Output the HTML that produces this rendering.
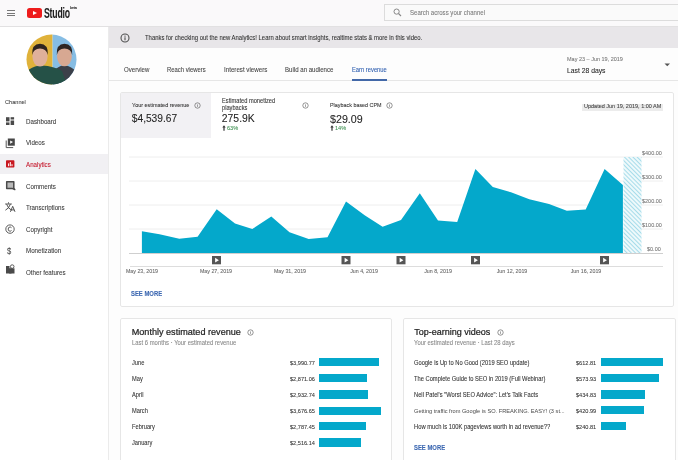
<!DOCTYPE html>
<html><head><meta charset="utf-8">
<style>
*{box-sizing:border-box;margin:0;padding:0}
html,body{width:678px;height:460px;overflow:hidden;background:#fdfdfd;font-family:"Liberation Sans",sans-serif;color:#282828}
.a{position:absolute;white-space:nowrap}
#hdr{position:absolute;left:0;top:0;width:678px;height:27px;background:#faf9fa;border-bottom:1px solid #e2e1e2}
#side{position:absolute;left:0;top:27px;width:109px;height:433px;background:#fff;border-right:1px solid #ebebeb}
#banner{position:absolute;left:109px;top:27px;width:569px;height:21px;background:#e8e6e9}
.card{position:absolute;background:#fff;border:1px solid #e6e6e6;border-radius:2px}
.nav{font-size:6.82px;color:#3a3a3a}
.ico{position:absolute}
.s{transform:scaleX(0.909);transform-origin:0 50%}
.s.xl{transform:translateX(-50%) scaleX(0.909);transform-origin:50% 50%}
body>*{filter:blur(0.3px)}
.a{-webkit-text-stroke:0.08px currentColor}
.tab{top:66px;height:8px;line-height:8px}
.xl{top:268.4px;font-size:5.83px;color:#666;transform:translateX(-50%)}
.ml{font-size:6.27px;color:#333}
.mv{font-size:6.16px;color:#333}
.tl{font-size:6.33px;color:#333}
.bar{height:8.2px;background:#04a8cb}
</style></head><body>
<div id="hdr">
  <!-- hamburger -->
  <div class="a" style="left:6.5px;top:10px;width:8px;height:1px;background:#777"></div>
  <div class="a" style="left:6.5px;top:12.5px;width:8px;height:1px;background:#777"></div>
  <div class="a" style="left:6.5px;top:15px;width:8px;height:1px;background:#777"></div>
  <!-- yt logo -->
  <div class="a" style="left:26.5px;top:7.8px;width:15px;height:10px;background:#ee1c1c;border-radius:2.5px"></div>
  <svg class="a" style="left:26.5px;top:7.8px" width="15" height="10"><path d="M6 3 L10 5 L6 7 Z" fill="#fff"/></svg>
  <div class="a" style="left:43.8px;top:4.6px;font-size:14px;line-height:16px;font-weight:bold;letter-spacing:-0.3px;color:#1e1e1e;transform:scaleX(0.62);transform-origin:left">Studio</div>
  <div class="s a" style="left:70px;top:7.40px;font-size:3.74px;line-height:3px;font-weight:bold;color:#333">beta</div>
  <!-- search -->
  <div class="a" style="left:384px;top:4px;width:300px;height:17px;background:#fafafa;border:1px solid #dcdcdc"></div>
  <svg class="a" style="left:393px;top:8px" width="9" height="9"><circle cx="3.6" cy="3.6" r="2.6" fill="none" stroke="#888" stroke-width="1"/><line x1="5.5" y1="5.5" x2="8" y2="8" stroke="#888" stroke-width="1.1"/></svg>
  <div class="s a" style="left:410px;top:8.64px;font-size:6.66px;color:#7a7a7a">Search across your channel</div>
</div>

<div id="side">
  <svg class="a" style="left:26px;top:7px" width="51" height="51" viewBox="0 0 51 51">
    <defs><clipPath id="cc"><circle cx="25.5" cy="25.5" r="25"/></clipPath></defs>
    <g clip-path="url(#cc)">
      <rect x="0" y="0" width="26.6" height="51" fill="#e0b23a"/>
      <rect x="26.6" y="0" width="25" height="51" fill="#86bde4"/>
      <!-- right person -->
      <path d="M27 51 L28 37 Q33 31 38.5 31.5 Q46 32 50 38 L51 51 Z" fill="#3b4049"/>
      <ellipse cx="38.4" cy="22.6" rx="7.4" ry="9.6" fill="#d7a892"/>
      <path d="M30.8 21 Q30 10 38.5 9.8 Q47 10 46.2 21 Q45 14.5 38.5 14.5 Q32 14.5 30.8 21 Z" fill="#2f2624"/>
      <!-- left person -->
      <path d="M0 51 L3 35.5 Q10 31 16 31.5 Q28 32 36 37 L41 51 Z" fill="#255147"/>
      <ellipse cx="14" cy="22.6" rx="7.6" ry="10" fill="#dfb09a"/>
      <path d="M6.2 21 Q5.5 10 14 9.8 Q22.5 10 21.8 21 Q20.5 14.5 14 14.5 Q7.5 14.5 6.2 21 Z" fill="#2e2420"/>
    </g>
  </svg>
  <div class="s a" style="left:5px;top:71.16px;font-size:6.16px;color:#444">Channel</div>
  <div class="a" style="left:0;top:127px;width:108px;height:20px;background:#f1f0f3"></div>
  <!-- labels -->
  <div class="s a nav" style="left:26px;top:91.2px">Dashboard</div>
  <div class="s a nav" style="left:26px;top:112.2px">Videos</div>
  <div class="s a nav" style="left:26px;top:134.3px;color:#c4162a">Analytics</div>
  <div class="s a nav" style="left:26px;top:155.9px">Comments</div>
  <div class="s a nav" style="left:26px;top:177.2px">Transcriptions</div>
  <div class="s a nav" style="left:26px;top:199.2px">Copyright</div>
  <div class="s a nav" style="left:26px;top:220.4px">Monetization</div>
  <div class="s a nav" style="left:26px;top:242.2px">Other features</div>
</div>

<svg class="a" style="left:0;top:0" width="110" height="460">
  <g fill="#4a4a4a">
    <rect x="6" y="117.2" width="3.5" height="4.2"/><rect x="10.6" y="117.2" width="3.5" height="2.3"/>
    <rect x="6" y="122.4" width="3.5" height="2.6"/><rect x="10.6" y="120.5" width="3.5" height="4.5"/>
  </g>
  <path d="M6.2 140.5 V147.6 H13.2" fill="none" stroke="#555" stroke-width="1"/>
  <rect x="7.8" y="138.5" width="7" height="7.2" fill="#474747"/>
  <path d="M10.2 140.4 L13 142.1 L10.2 143.8 Z" fill="#fff"/>
  <rect x="6" y="160.2" width="8.4" height="7.4" rx="0.8" fill="#c8171f"/>
  <rect x="8.1" y="163.4" width="1" height="2.8" fill="#fff"/><rect x="9.8" y="162" width="1" height="4.2" fill="#fff"/><rect x="11.5" y="164.2" width="1" height="2" fill="#fff"/>
  <path d="M6.7 181.8 H13.8 V188.2 L14.8 189.6 L12.6 188.6 H6.7 Z" fill="#b9b9b9" stroke="#4a4a4a" stroke-width="1.5" stroke-linejoin="round"/>
  <circle cx="10" cy="229.1" r="4.2" fill="none" stroke="#4a4a4a" stroke-width="0.9"/>
  <path d="M11.5 227.7 Q11 227 10 227 Q8.2 227 8.2 229.1 Q8.2 231.2 10 231.2 Q11 231.2 11.5 230.5" fill="none" stroke="#4a4a4a" stroke-width="0.9"/>
  <path d="M0 1.5 H3.5 V4 H5.5 V9 H0 Z" transform="translate(6,264.5)" fill="#4a4a4a"/>
  <rect x="9.2" y="268.3" width="5.3" height="5.2" fill="#4a4a4a"/>
  <circle cx="12.2" cy="266.6" r="1.8" fill="none" stroke="#4a4a4a" stroke-width="0.9"/>
</svg>
<svg class="a" style="left:0;top:196px" width="20" height="20"><g fill="none" stroke="#4a4a4a" stroke-width="0.95">
<path d="M8.5 6.3 V7.6"/><path d="M5.2 8 H11.8"/><path d="M6.6 8.2 Q8 12.5 11.6 14.2"/><path d="M10.4 8.2 Q9 12.5 5.4 14.2"/>
<path d="M10.4 15.8 L12.7 10.3 L15 15.8"/><path d="M11.3 13.9 H14.1"/></g></svg>
<div class="a" style="left:7.2px;top:245px;font-size:9.5px;line-height:11px;color:#4a4a4a;transform:scaleX(0.8);transform-origin:left">$</div>
<div id="banner">
  <svg class="a" style="left:11px;top:6px" width="10" height="10"><circle cx="5" cy="5" r="4" fill="none" stroke="#505050" stroke-width="1.1"/><rect x="4.45" y="4.3" width="1.1" height="3" fill="#505050"/><rect x="4.45" y="2.6" width="1.1" height="1.1" fill="#505050"/></svg>
  <div class="s a" style="left:36px;top:7.14px;font-size:6.53px;color:#333">Thanks for checking out the new Analytics! Learn about smart insights, realtime stats &amp; more in this video.</div>
</div>

<!-- tabs -->
<div class="a" style="left:109px;top:80px;width:569px;height:1px;background:#e6e6e6"></div>
<div class="s a tab" style="left:123.8px;font-size:6.71px;color:#444">Overview</div>
<div class="s a tab" style="left:167px;font-size:6.49px;color:#444">Reach viewers</div>
<div class="s a tab" style="left:223.6px;font-size:6.82px;color:#444">Interest viewers</div>
<div class="s a tab" style="left:285px;font-size:6.71px;color:#444">Build an audience</div>
<div class="s a tab" style="left:352px;font-size:6.38px;color:#3160b0">Earn revenue</div>
<div class="a" style="left:352px;top:79px;width:35px;height:2px;background:#4268a8"></div>
<!-- date -->
<div class="s a" style="left:566.5px;top:56.17px;font-size:6.05px;color:#777">May 23 – Jun 19, 2019</div>
<div class="s a" style="left:566.5px;top:66.09px;font-size:7.48px;color:#282828">Last 28 days</div>
<svg class="a" style="left:664px;top:63px" width="7" height="4"><path d="M0.5 0.5 L6 0.5 L3.25 3.2 Z" fill="#555"/></svg>

<!-- main card -->
<div class="card" style="left:120px;top:92px;width:554px;height:215px"></div>
<div class="a" style="left:121px;top:93px;width:90px;height:45px;background:#f2f1f4"></div>
<div class="s a" style="left:131.8px;top:101.77px;font-size:6.01px;color:#333">Your estimated revenue</div>
<svg class="a" style="left:193.5px;top:102px" width="7" height="7"><circle cx="3.5" cy="3.5" r="2.7" fill="none" stroke="#666" stroke-width="0.7"/><rect x="3.2" y="3" width="0.6" height="1.9" fill="#666"/><rect x="3.2" y="2" width="0.6" height="0.6" fill="#666"/></svg>
<div class="a" style="left:131.8px;top:112.60px;font-size:10.2px;color:#222">$4,539.67</div>

<div class="s a" style="left:221.8px;top:96.56px;font-size:6.27px;color:#333;line-height:7.5px">Estimated monetized<br>playbacks</div>
<svg class="a" style="left:301.5px;top:101.5px" width="7" height="7"><circle cx="3.5" cy="3.5" r="2.7" fill="none" stroke="#666" stroke-width="0.7"/><rect x="3.2" y="3" width="0.6" height="1.9" fill="#666"/><rect x="3.2" y="2" width="0.6" height="0.6" fill="#666"/></svg>
<div class="a" style="left:221.8px;top:113.10px;font-size:10.4px;color:#222">275.9K</div>
<svg class="a" style="left:222px;top:125px" width="4" height="6"><path d="M2 0.3 L3.7 2.4 H2.6 V5.8 H1.4 V2.4 H0.3 Z" fill="#333"/></svg><div class="s a" style="left:227.3px;top:124.46px;font-size:6.16px;color:#3d8f50">63%</div>

<div class="s a" style="left:330px;top:101.78px;font-size:5.94px;color:#333">Playback based CPM</div>
<svg class="a" style="left:386px;top:101.5px" width="7" height="7"><circle cx="3.5" cy="3.5" r="2.7" fill="none" stroke="#666" stroke-width="0.7"/><rect x="3.2" y="3" width="0.6" height="1.9" fill="#666"/><rect x="3.2" y="2" width="0.6" height="0.6" fill="#666"/></svg>
<div class="a" style="left:330px;top:112.60px;font-size:10.7px;color:#222">$29.09</div>
<svg class="a" style="left:330px;top:125px" width="4" height="6"><path d="M2 0.3 L3.7 2.4 H2.6 V5.8 H1.4 V2.4 H0.3 Z" fill="#333"/></svg><div class="s a" style="left:335.3px;top:124.46px;font-size:6.16px;color:#3d8f50">14%</div>

<div class="a" style="left:582px;top:103.5px;width:81px;height:7px;background:#ececec"></div>
<div class="s a" style="left:583.5px;top:103.17px;font-size:6.05px;color:#444">Updated Jun 19, 2019, 1:00 AM</div>

<svg class="a" style="left:0;top:0" width="678" height="460">
  <defs>
    <pattern id="hatch" width="3" height="3" patternUnits="userSpaceOnUse" patternTransform="rotate(-45)">
      <rect width="3" height="3" fill="#eef9fb"/>
      <rect width="1" height="3" fill="#a6dcea"/>
    </pattern>
  </defs>
  <g stroke="#eeeeee" stroke-width="1">
    <line x1="129" y1="157" x2="663" y2="157"/>
    <line x1="129" y1="181" x2="663" y2="181"/>
    <line x1="129" y1="205" x2="663" y2="205"/>
    <line x1="129" y1="229" x2="663" y2="229"/>
  </g>
  <path d="M141.9 253 L141.9 231.2 L159.5 234.3 L179.3 238.8 L197.6 236.7 L216.7 209.3 L235.0 223.6 L252.3 229.0 L271.3 216.6 L289.5 232.2 L308.7 238.9 L327.5 237.3 L346.0 201.4 L365.0 215.4 L382.6 226.7 L401.0 220.0 L419.8 193.2 L438.0 220.6 L457.2 222.1 L475.4 168.9 L492.8 187.1 L511.0 192.3 L529.3 199.3 L549.0 204.0 L566.8 210.7 L585.7 209.5 L604.6 169.0 L622.9 185.0 L622.9 253 Z" fill="#04a8cb"/>
  <rect x="623.5" y="157" width="18" height="96" fill="url(#hatch)"/>
  <line x1="129" y1="253.5" x2="663" y2="253.5" stroke="#cfcfcf" stroke-width="1"/>
  <line x1="130" y1="266.5" x2="663" y2="266.5" stroke="#dddddd" stroke-width="1"/>
  <g fill="#555">
    <rect x="212" y="256" width="9" height="8.3"/>
    <rect x="341.5" y="256" width="9" height="8.3"/>
    <rect x="396.5" y="256" width="9" height="8.3"/>
    <rect x="471" y="256" width="9" height="8.3"/>
    <rect x="600" y="256" width="9" height="8.3"/>
  </g>
  <g fill="#fff"><path d="M215.1 257.8 L218.9 260.15 L215.1 262.5 Z"/><path d="M344.6 257.8 L348.4 260.15 L344.6 262.5 Z"/><path d="M399.6 257.8 L403.4 260.15 L399.6 262.5 Z"/><path d="M474.1 257.8 L477.9 260.15 L474.1 262.5 Z"/><path d="M603.1 257.8 L606.9 260.15 L603.1 262.5 Z"/></g>
</svg>
<div class="s a yl" style="left:641.5px;top:149.67px;font-size:6.05px;color:#777">$400.00</div>
<div class="s a yl" style="left:641.5px;top:173.67px;font-size:6.05px;color:#777">$300.00</div>
<div class="s a yl" style="left:641.5px;top:197.67px;font-size:6.05px;color:#777">$200.00</div>
<div class="s a yl" style="left:641.5px;top:221.67px;font-size:6.05px;color:#777">$100.00</div>
<div class="s a yl" style="left:646.5px;top:245.67px;font-size:6.05px;color:#777">$0.00</div>

<div class="s a xl" style="left:141.9px">May 23, 2019</div>
<div class="s a xl" style="left:215.9px">May 27, 2019</div>
<div class="s a xl" style="left:289.9px">May 31, 2019</div>
<div class="s a xl" style="left:363.9px">Jun 4, 2019</div>
<div class="s a xl" style="left:437.9px">Jun 8, 2019</div>
<div class="s a xl" style="left:511.9px">Jun 12, 2019</div>
<div class="s a xl" style="left:585.9px">Jun 16, 2019</div>

<div class="s a" style="left:131.3px;top:290px;font-size:6.49px;font-weight:bold;color:#3a66b0">SEE MORE</div>

<!-- bottom left card -->
<div class="card" style="left:120px;top:318px;width:272px;height:150px"></div>
<div class="a" style="left:131.7px;top:326.8px;font-size:9.1px;color:#1e1e1e;-webkit-text-stroke:0.22px #1e1e1e">Monthly estimated revenue</div>
<svg class="a" style="left:247px;top:328.5px" width="7" height="7"><circle cx="3.5" cy="3.5" r="2.7" fill="none" stroke="#666" stroke-width="0.7"/><rect x="3.2" y="3" width="0.6" height="1.9" fill="#666"/><rect x="3.2" y="2" width="0.6" height="0.6" fill="#666"/></svg>
<div class="s a" style="left:131.7px;top:339.05px;font-size:6.49px;color:#888">Last 6 months · Your estimated revenue</div>
<div class="s a ml" style="left:131.7px;top:358.66px">June</div>
<div class="s a ml" style="left:131.7px;top:374.66px">May</div>
<div class="s a ml" style="left:131.7px;top:390.66px">April</div>
<div class="s a ml" style="left:131.7px;top:407.16px">March</div>
<div class="s a ml" style="left:131.7px;top:423.16px">February</div>
<div class="s a ml" style="left:131.7px;top:439.16px">January</div>
<div class="s a mv" style="left:289.6px;top:358.66px">$3,990.77</div>
<div class="s a mv" style="left:289.6px;top:374.66px">$2,871.06</div>
<div class="s a mv" style="left:289.6px;top:390.66px">$2,932.74</div>
<div class="s a mv" style="left:289.6px;top:407.16px">$3,676.65</div>
<div class="s a mv" style="left:289.6px;top:423.16px">$2,787.45</div>
<div class="s a mv" style="left:289.6px;top:439.16px">$2,516.14</div>
<div class="a bar" style="left:319px;top:358.3px;width:60px"></div>
<div class="a bar" style="left:319px;top:374.3px;width:48px"></div>
<div class="a bar" style="left:319px;top:390.4px;width:49px"></div>
<div class="a bar" style="left:319px;top:406.6px;width:61.7px"></div>
<div class="a bar" style="left:319px;top:422.3px;width:46.8px"></div>
<div class="a bar" style="left:319px;top:438.4px;width:42px"></div>

<!-- bottom right card -->
<div class="card" style="left:403px;top:318px;width:273px;height:150px"></div>
<div class="a" style="left:414.3px;top:326.8px;font-size:9px;color:#1e1e1e;-webkit-text-stroke:0.22px #1e1e1e">Top-earning videos</div>
<svg class="a" style="left:496.5px;top:328.5px" width="7" height="7"><circle cx="3.5" cy="3.5" r="2.7" fill="none" stroke="#666" stroke-width="0.7"/><rect x="3.2" y="3" width="0.6" height="1.9" fill="#666"/><rect x="3.2" y="2" width="0.6" height="0.6" fill="#666"/></svg>
<div class="s a" style="left:414.3px;top:339.05px;font-size:6.49px;color:#888">Your estimated revenue · Last 28 days</div>
<div class="s a tl" style="left:414.3px;top:358.65px">Google is Up to No Good (2019 SEO update)</div>
<div class="s a tl" style="left:414.3px;top:374.85px">The Complete Guide to SEO in 2019 (Full Webinar)</div>
<div class="s a tl" style="left:414.3px;top:391.15px">Neil Patel's "Worst SEO Advice": Let's Talk Facts</div>
<div class="s a tl" style="left:414.3px;top:407.1px;font-size:6.22px;color:#4a4a4a;-webkit-text-stroke:0">Getting traffic from Google is SO. FREAKING. EASY! (3 st...</div>
<div class="s a tl" style="left:414.3px;top:422.95px;font-size:6.38px">How much is 100K pageviews worth in ad revenue??</div>
<div class="s a mv" style="left:576px;top:358.66px">$612.81</div>
<div class="s a mv" style="left:576px;top:375.16px">$573.93</div>
<div class="s a mv" style="left:576px;top:391.16px">$434.83</div>
<div class="s a mv" style="left:576px;top:407.16px">$420.99</div>
<div class="s a mv" style="left:576px;top:423.16px">$240.81</div>
<div class="a bar" style="left:601.3px;top:358.3px;width:62px"></div>
<div class="a bar" style="left:601.3px;top:374.2px;width:58px"></div>
<div class="a bar" style="left:601.3px;top:390.4px;width:44px"></div>
<div class="a bar" style="left:601.3px;top:406.3px;width:42.5px"></div>
<div class="a bar" style="left:601.3px;top:422.2px;width:24.3px"></div>
<div class="s a" style="left:414.4px;top:444.2px;font-size:6.49px;font-weight:bold;color:#3a66b0">SEE MORE</div>

</body></html>
